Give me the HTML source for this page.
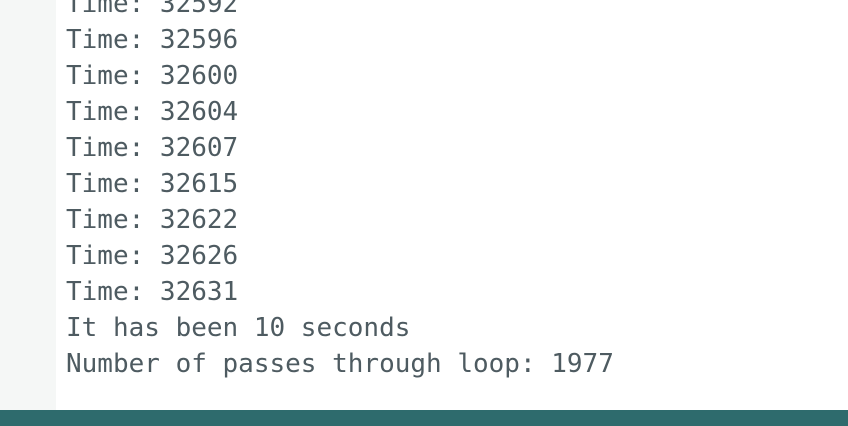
<!DOCTYPE html>
<html><head><style>
html,body{margin:0;padding:0;width:848px;height:426px;overflow:hidden;background:#fff}
.side{position:absolute;left:0;top:0;width:56px;height:410px;background:#f5f7f6}
.bar{position:absolute;left:0;top:410px;width:848px;height:16px;background:#2e6b6d}
pre{position:absolute;left:66px;top:-14px;margin:0;font-family:"DejaVu Sans Mono","Liberation Mono",monospace;font-size:26px;line-height:36px;color:#4e5b61}
</style></head><body>
<div class="side"></div>
<pre>Time: 32592
Time: 32596
Time: 32600
Time: 32604
Time: 32607
Time: 32615
Time: 32622
Time: 32626
Time: 32631
It has been 10 seconds
Number of passes through loop: 1977</pre>
<div class="bar"></div>
</body></html>
